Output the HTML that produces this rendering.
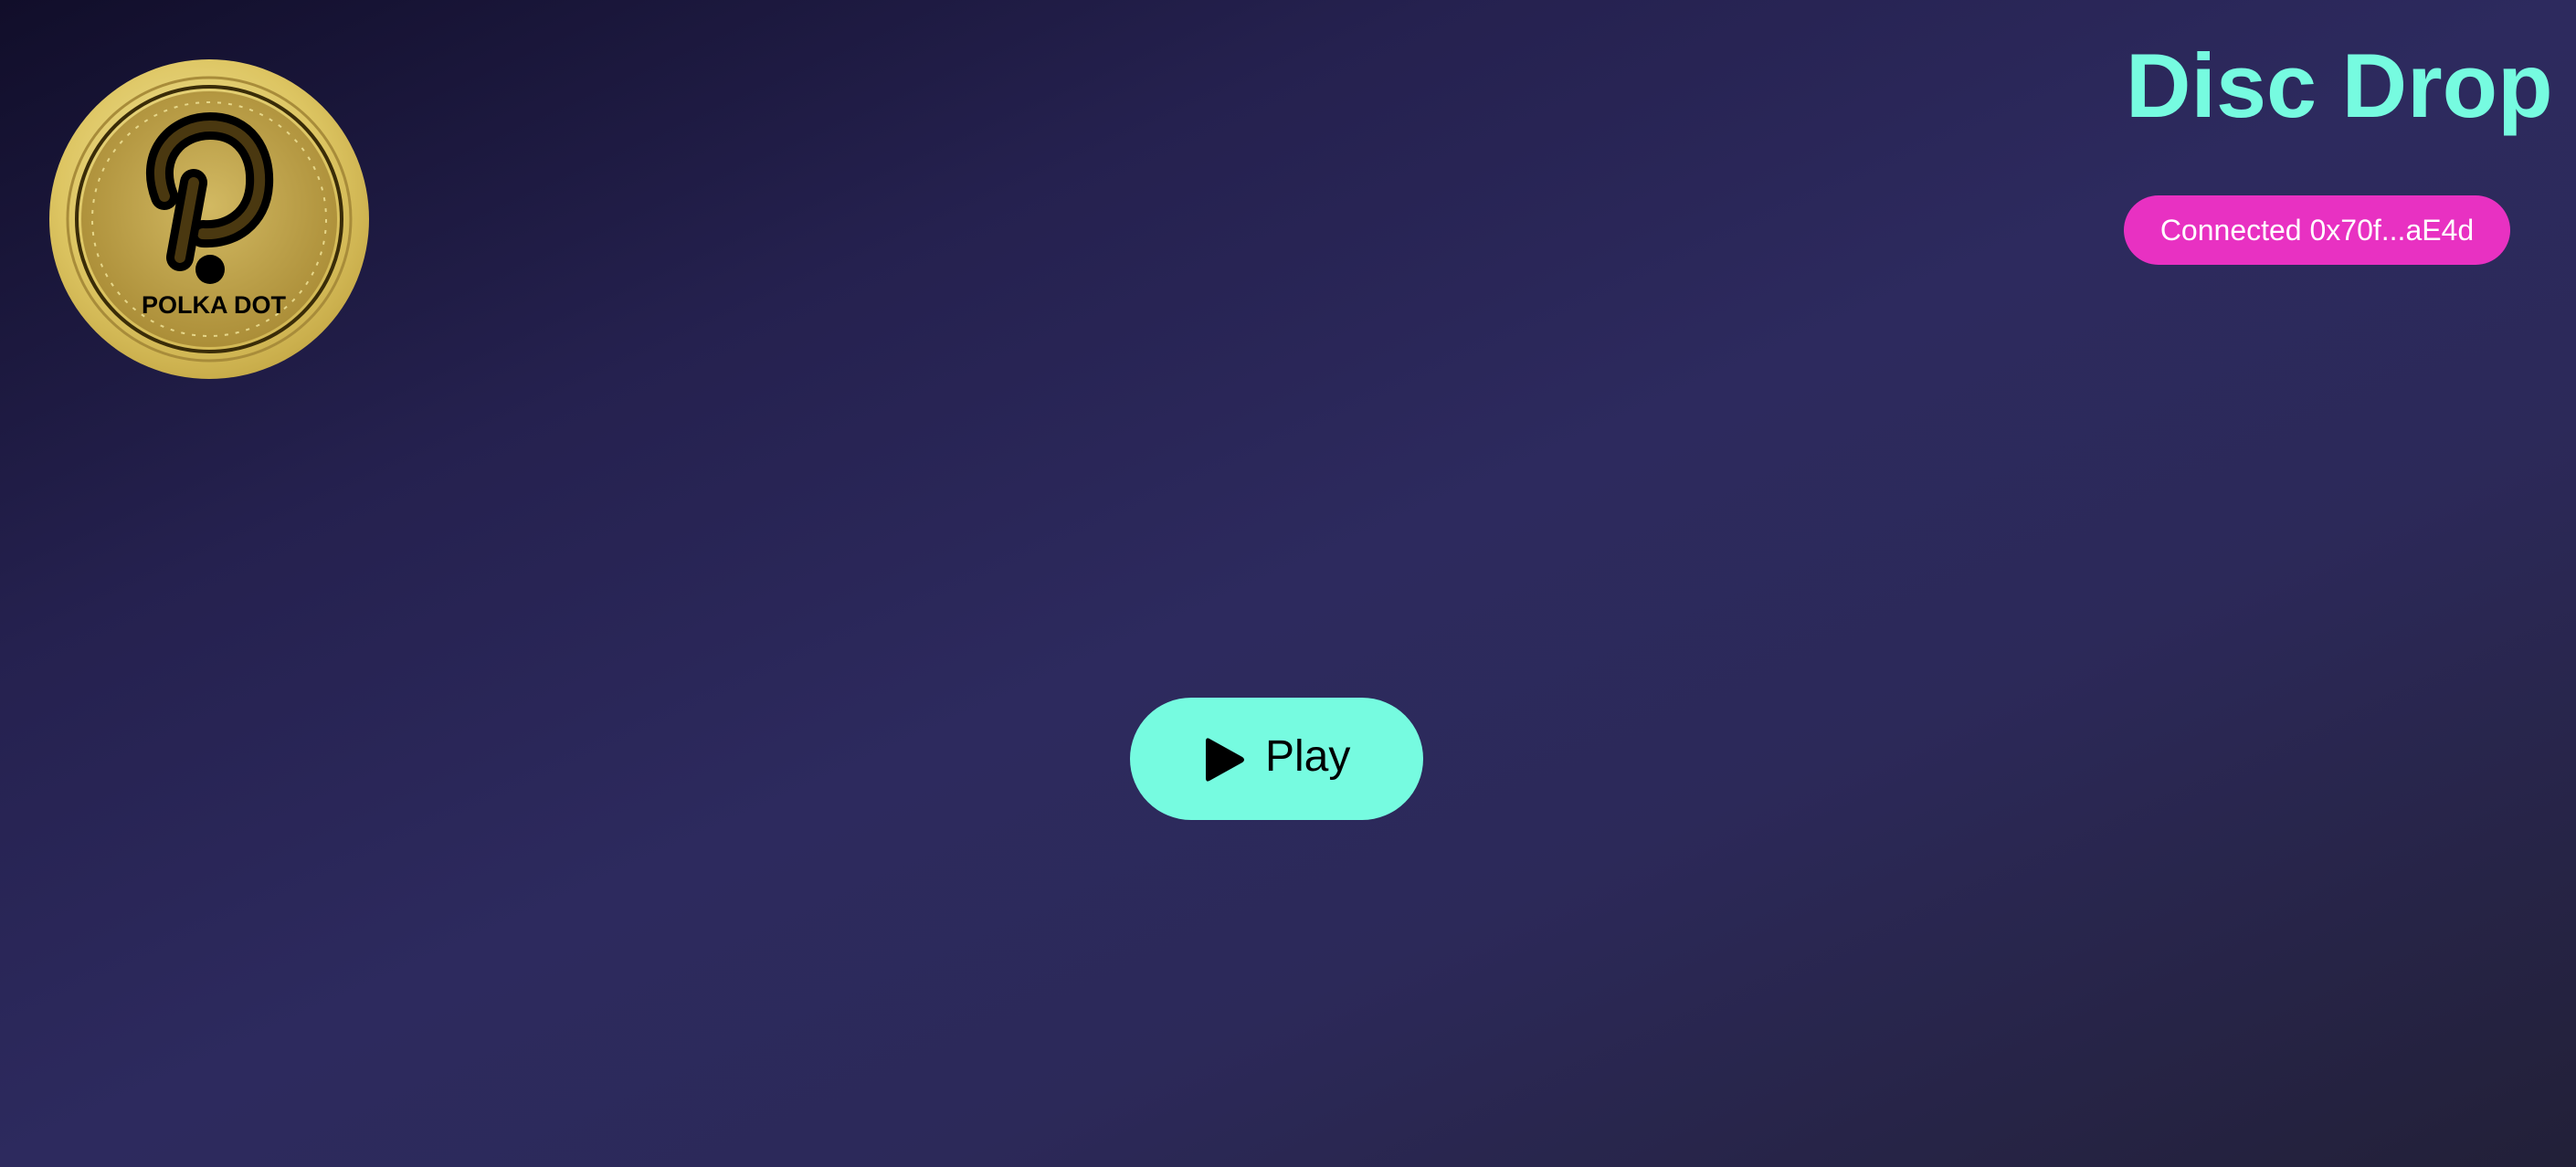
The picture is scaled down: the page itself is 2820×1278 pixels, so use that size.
<!DOCTYPE html>
<html><head><meta charset="utf-8"><style>
html,body{margin:0;padding:0}
body{width:2820px;height:1278px;overflow:hidden;position:relative;font-family:"Liberation Sans",Arial,sans-serif;
background:linear-gradient(to bottom right,#110e2a 0%,#25214f 28%,#2d2a5e 50%,#2c2959 68%,#222038 100%);}
.title{position:absolute;left:2327px;top:44px;font-size:99px;font-weight:bold;color:#76fbe0;line-height:1;white-space:nowrap}
.conn{position:absolute;left:2325px;top:214px;width:423px;height:76px;border-radius:38px;background:#e831c2;color:#fff;font-size:32px;line-height:76px;text-align:center}
.play{position:absolute;left:1237px;top:764px;width:321px;height:134px;border-radius:67px;background:#76fbe0;}
.play svg{position:absolute;left:83px;top:43px}
.play span{position:absolute;left:148px;top:39px;font-size:48px;color:#000;line-height:1.1}
.coin{position:absolute;left:53px;top:64px}
</style></head><body>
<svg class="coin" width="352" height="352" viewBox="53 64 352 352">
<defs>
<radialGradient id="g1" cx="0.45" cy="0.4" r="0.7"><stop offset="0" stop-color="#f3e8a0"/><stop offset="0.6" stop-color="#ddc562"/><stop offset="1" stop-color="#bea03e"/></radialGradient>
<radialGradient id="g2" cx="0.5" cy="0.45" r="0.6"><stop offset="0" stop-color="#d2b962"/><stop offset="1" stop-color="#a88a34"/></radialGradient>
</defs>
<circle cx="229" cy="240" r="175" fill="url(#g1)"/>
<circle cx="229" cy="240" r="155" fill="none" stroke="#a88c3a" stroke-width="3"/>
<circle cx="229" cy="240" r="145" fill="none" stroke="#3a2c08" stroke-width="4"/>
<circle cx="229" cy="240" r="140" fill="url(#g2)"/>
<circle cx="229" cy="240" r="128" fill="none" stroke="#e6d78a" stroke-width="2" stroke-dasharray="4 8"/>
<path d="M180 215 C162 168,195 138,230 138 C268 138,286 168,284 202 C282 240,252 258,222 256" fill="none" stroke="#000" stroke-width="30" stroke-linecap="round"/>
<path d="M180 215 C162 168,195 138,230 138 C268 138,286 168,284 202 C282 240,252 258,222 256" fill="none" stroke="#4a3810" stroke-width="12" stroke-linecap="round"/>
<path d="M212 200 L197 282" fill="none" stroke="#000" stroke-width="30" stroke-linecap="round"/>
<path d="M212 200 L197 282" fill="none" stroke="#4a3810" stroke-width="12" stroke-linecap="round"/>
<circle cx="230" cy="295" r="16" fill="#000"/>
<text x="234" y="343" text-anchor="middle" font-family="Liberation Sans,sans-serif" font-weight="bold" font-size="27" fill="#000">POLKA DOT</text>
</svg>
<div class="title">Disc Drop</div>
<div class="conn">Connected 0x70f...aE4d</div>
<div class="play"><svg width="44" height="50" viewBox="0 0 44 50"><path d="M4 2 L40 22 Q44 25 40 28 L4 48 Q0 50 0 45 L0 5 Q0 0 4 2Z" fill="#000"/></svg><span>Play</span></div>
</body></html>
